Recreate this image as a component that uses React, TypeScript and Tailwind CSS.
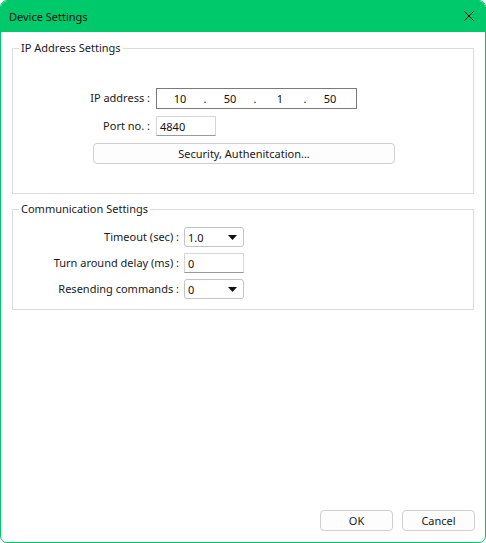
import type { ReactNode } from "react";

const font = { fontFamily: '"Noto Sans", "Open Sans", sans-serif' };

function GroupBox({ title, className, children }: { title: string; className?: string; children: ReactNode }) {
    return (
        <fieldset className={`mx-[11px] border border-[#dcdcdc] px-0 ${className ?? ""}`}>
            <legend className="ml-[6px] px-[2px] text-[11px] leading-[16px] text-[#1a1a1a]">{title}</legend>
            {children}
        </fieldset>
    );
}

function Combo({ value }: { value: string }) {
    return (
        <div className="flex h-[20px] w-[60px] items-center justify-between rounded-[3px] border border-[#c4c4c4] bg-white pl-[3px] pr-[6px]">
            <span className="text-[11px] leading-none text-[#111]">{value}</span>
            <svg width="9" height="5" viewBox="0 0 9 5">
                <path d="M0 0h9L4.5 5z" fill="#111" />
            </svg>
        </div>
    );
}

function Edit({ value, width }: { value: string; width: string }) {
    return (
        <div className={`flex h-[20px] ${width} items-center border border-[#d6d6d6] border-b-[#9a9a9a] bg-white pl-[3px]`}>
            <span className="text-[11px] leading-none text-[#111]">{value}</span>
        </div>
    );
}

function Button({ label, className }: { label: string; className?: string }) {
    return (
        <button className={`h-[21px] rounded-[4px] border border-[#d0d0d0] bg-[#fdfdfd] text-[11px] leading-none text-[#1a1a1a] ${className ?? ""}`}>
            {label}
        </button>
    );
}

export default function App() {
    const ip = ["10", "50", "1", "50"];

    return (
        <div className="h-[543px] w-[486px] bg-white" style={font}>
            <div className="flex h-[543px] w-[486px] flex-col overflow-hidden rounded-[7px] border border-[#00c96b] bg-white">
                {/* Title bar */}
                <div className="flex h-[31px] shrink-0 items-center justify-between bg-[#00c96b] pl-[8px] pr-[10px]">
                    <span className="text-[11px] leading-none text-[#111]">Device Settings</span>
                    <svg width="10" height="10" viewBox="0 0 10 10" className="mb-[2px] mr-[1px]">
                        <path d="M0.5 0.5l9 9M9.5 0.5l-9 9" stroke="#111" strokeWidth="1" />
                    </svg>
                </div>

                <div className="flex flex-1 flex-col">
                    <GroupBox title="IP Address Settings" className="mt-[8px] h-[154px]">
                        <div className="mt-[32px] flex items-center">
                            <span className="w-[137px] text-right text-[11px] text-[#1a1a1a]">IP address :</span>
                            <div className="ml-[6px] flex h-[21px] w-[201px] items-center border border-[#7a7a7a] bg-white pl-[2px]">
                                {ip.map((part, i) => (
                                    <div key={i} className="flex items-center">
                                        {i > 0 && <span className="w-[8px] text-center text-[11px] leading-none text-[#111]">.</span>}
                                        <span className="w-[42px] text-center text-[11px] leading-none text-[#111]">{part}</span>
                                    </div>
                                ))}
                            </div>
                        </div>
                        <div className="mt-[7px] flex items-center">
                            <span className="w-[137px] text-right text-[11px] text-[#1a1a1a]">Port no. :</span>
                            <div className="ml-[6px]">
                                <Edit value="4840" width="w-[60px]" />
                            </div>
                        </div>
                        <div className="mt-[7px] flex pl-[80px]">
                            <Button label="Security, Authenitcation..." className="w-[302px]" />
                        </div>
                    </GroupBox>

                    <GroupBox title="Communication Settings" className="mt-[7px] h-[109px]">
                        <div className="mt-[10px] flex flex-col gap-[6px]">
                            <div className="flex items-center">
                                <span className="w-[166px] text-right text-[11px] text-[#1a1a1a]">Timeout (sec) :</span>
                                <div className="ml-[5px]"><Combo value="1.0" /></div>
                            </div>
                            <div className="flex items-center">
                                <span className="w-[166px] text-right text-[11px] text-[#1a1a1a]">Turn around delay (ms) :</span>
                                <div className="ml-[5px]"><Edit value="0" width="w-[60px]" /></div>
                            </div>
                            <div className="flex items-center">
                                <span className="w-[166px] text-right text-[11px] text-[#1a1a1a]">Resending commands :</span>
                                <div className="ml-[5px]"><Combo value="0" /></div>
                            </div>
                        </div>
                    </GroupBox>

                    {/* Dialog buttons */}
                    <div className="mt-auto mb-[11px] flex justify-end gap-[9px] pr-[10px]">
                        <Button label="OK" className="w-[73px]" />
                        <Button label="Cancel" className="w-[73px]" />
                    </div>
                </div>
            </div>
        </div>
    );
}
